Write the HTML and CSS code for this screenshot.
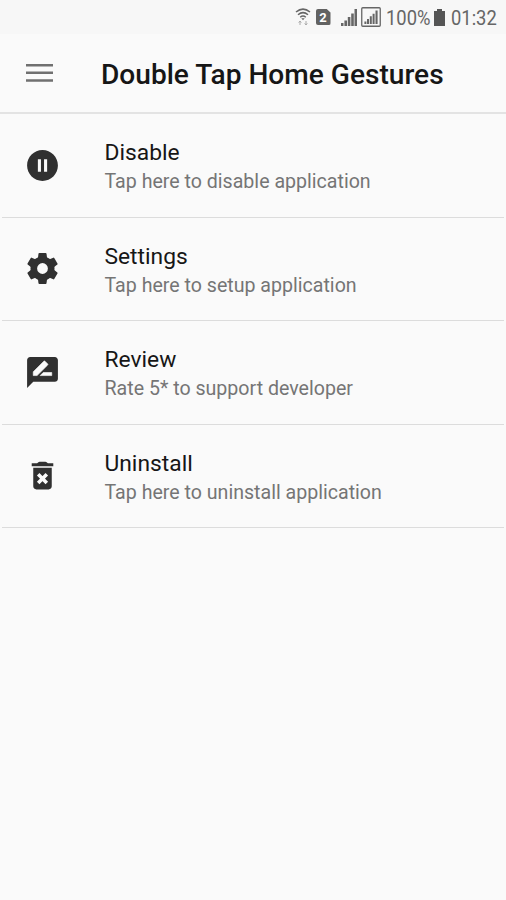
FILE: index.html
```html
<!DOCTYPE html>
<html lang="en">
<head>
<meta charset="utf-8">
<title>Double Tap Home Gestures</title>
<link rel="stylesheet" href="styles.css">
</head>
<body>
<div class="status">
  <svg class="wifi" viewBox="0 0 16 18" fill="none" stroke="#666" stroke-width="1.5">
    <path d="M1 4Q8-1.8 15 4M3 6.7Q8 2.5 13 6.7M5.2 9.2Q8 6.8 10.8 9.2"/>
    <path d="M6.3 10.2h3.4L8 12.2z" fill="#666" stroke="none"/>
    <path d="M5 13v4M3.7 14.6L5 13l1.3 1.6M11 13v4M9.7 15.4L11 17l1.3-1.6" stroke="#aaa" stroke-width="1"/>
  </svg>
  <div class="sim">2</div>
  <svg class="signal" viewBox="0 0 16 17" fill="#666"><path d="M0 14h2.5v3H0zM3.4 11.5H6V17H3.4zM6.8 8h2.6v9H6.8zM10.2 4.500h2.600V17h-2.600zM13.500 0H16v17h-2.500z"/></svg>
  <svg class="signal-box" viewBox="0 0 20 20" fill="#666"><rect x=".75" y=".75" width="18.5" height="18.5" rx="1" fill="none" stroke="#666" stroke-width="1.3"/><path d="M3.400 14.500h2V17h-2zM6 12h2v5H6zM8.800 9.300h2V17h-2zM11.600 6.800h2V17h-2zM14.500 3.500h2.100V17h-2.100z"/></svg>
  <div class="percent"><span class="narrow">100%</span></div>
  <svg class="battery" viewBox="0 0 11 17" fill="#555"><path d="M3 0h5v2h3v15H0V2h3z"/></svg>
  <div class="clock"><span class="narrow">01:32</span></div>
</div>
<header class="toolbar">
  <svg class="menu" viewBox="0 0 27 18" fill="#707070"><path d="M0 0h27v2.500H0zM0 7.600h27v2.500H0zM0 15.200h27v2.500H0z"/></svg>
  <h1 class="title">Double Tap Home Gestures</h1>
</header>
<main class="list">
  <div class="row">
    <svg class="icon" viewBox="0 0 24 24"><path d="M12 2C6.480 2 2 6.480 2 12s4.480 10 10 10 10-4.480 10-10S17.520 2 12 2zm-1 14H9V8h2v8zm4 0h-2V8h2v8z"/></svg>
    <div class="text"><div class="name">Disable</div><div class="desc">Tap here to disable application</div></div>
  </div>
  <div class="row">
    <svg class="icon" viewBox="0 0 24 24">
      <circle cx="12" cy="12" r="5.65" fill="none" stroke="#303030" stroke-width="4.3"/>
      <defs><path id="tooth" d="M8.900 6.200L9.400 2.400Q9.500 2 9.900 2h4.200q.4 0 .5.400l.5 3.800z"/></defs>
      <use href="#tooth"/>
      <use href="#tooth" transform="rotate(60 12 12)"/>
      <use href="#tooth" transform="rotate(120 12 12)"/>
      <use href="#tooth" transform="rotate(180 12 12)"/>
      <use href="#tooth" transform="rotate(240 12 12)"/>
      <use href="#tooth" transform="rotate(300 12 12)"/>
    </svg>
    <div class="text"><div class="name">Settings</div><div class="desc">Tap here to setup application</div></div>
  </div>
  <div class="row">
    <svg class="icon" viewBox="0 0 24 24">
      <path d="M20 2H4c-1.100 0-1.990.9-1.990 2L2 22l4-4h14c1.100 0 2-.9 2-2V4c0-1.100-.9-2-2-2z"/>
      <path class="cutout" d="M6 14v-2.470l6.880-6.880c.2-.2.510-.2.710 0l1.770 1.770c.2.200.2.510 0 .710L8.470 14H6zm12 0h-7.500l2-2H18v2z"/>
    </svg>
    <div class="text"><div class="name">Review</div><div class="desc">Rate 5* to support developer</div></div>
  </div>
  <div class="row">
    <svg class="icon" viewBox="0 0 24 24">
      <path d="M6 19c0 1.100.9 2 2 2h8c1.100 0 2-.9 2-2V7H6v12zM15.500 4q-.8-1-1.600-1h-3.800q-.8 0-1.600 1H5v2h14V4z"/>
      <path class="cross" d="M9.200 11.200l5.600 5.600M14.800 11.200l-5.600 5.600"/>
    </svg>
    <div class="text"><div class="name">Uninstall</div><div class="desc">Tap here to uninstall application</div></div>
  </div>
</main>
</body>
</html>
```
FILE: styles.css
```css
* { box-sizing: border-box; }
body {
  margin: 0;
  min-height: 900px;
  background: #fafafa;
  font-family: Roboto, "Liberation Sans", sans-serif;
}
svg { display: block; flex: none; }
.status {
  display: flex;
  align-items: center;
  height: 34px;
  padding-left: 294.5px;
  background: #f7f7f7;
  color: #666;
}
.wifi { width: 16px; height: 18px; }
.sim {
  width: 15px;
  height: 16px;
  margin-left: 5px;
  border-radius: 2px;
  background: #626262;
  clip-path: polygon(0 0, 75% 0, 100% 22%, 100% 100%, 0 100%);
  color: #fff;
  font: bold 13px/17px Roboto, sans-serif;
  text-align: center;
}
.signal { width: 16px; height: 17px; margin-left: 10px; }
.signal-box { width: 20px; height: 20px; margin-left: 4px; }
.percent { width: 44px; margin-left: 5px; }
.clock { width: 48px; margin-left: 6px; }
.narrow {
  display: inline-block;
  padding-top: 1px;
  font-size: 21px;
  line-height: 34px;
  transform: scaleX(.875);
  transform-origin: 0 50%;
}
.battery { width: 11px; height: 17px; margin-left: 4px; }
.toolbar {
  display: flex;
  align-items: center;
  height: 80px;
  padding-left: 26px;
  border-bottom: 2px solid #e3e3e3;
}
.menu { width: 27px; height: 18px; }
.title {
  margin: 0 0 0 48px;
  padding-top: 4px;
  color: #161616;
  font-size: 28.1px;
  font-weight: 500;
  line-height: 34px;
  white-space: nowrap;
}
.list { margin: 0 2px; }
.row {
  display: flex;
  align-items: center;
  height: 103.5px;
  padding-left: 22px;
  border-bottom: 1.5px solid #dcdcdc;
}
.icon { width: 37px; height: 37px; fill: #303030; }
.cutout { fill: #fafafa; stroke: #fafafa; stroke-width: .4; }
.cross { fill: none; stroke: #fafafa; stroke-width: 2.3; }
.text { margin-left: 43.5px; padding-top: 5px; white-space: nowrap; }
.name { color: #161616; font-size: 22.8px; line-height: 28px; }
.desc { color: #757575; font-size: 19.6px; line-height: 29px; }
```
